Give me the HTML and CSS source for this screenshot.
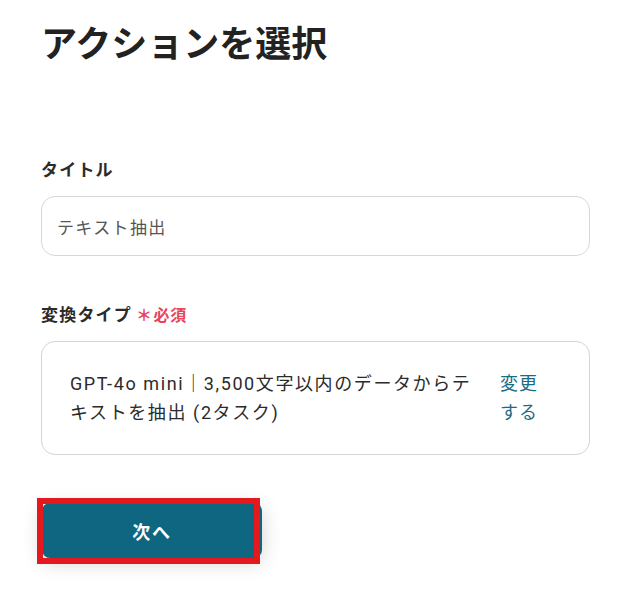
FILE: index.html
```html
<!DOCTYPE html>
<html lang="ja">
<head>
<meta charset="utf-8">
<link rel="stylesheet" href="styles.css">
</head>
<body>
<div class="page">
  <h1 class="title">アクションを選択</h1>
  <div class="field field-title">
    <div class="label">タイトル</div>
    <div class="input">テキスト抽出</div>
  </div>
  <div class="field field-type">
    <div class="label">変換タイプ<span class="req"><span class="ast">＊</span>必須</span></div>
    <div class="select-box">
      <div class="select-text">GPT-4o mini｜3,500文字以内のデータからテキストを抽出 (2タスク)</div>
      <div class="change-link">変更する</div>
    </div>
  </div>
  <div class="actions">
    <div class="btn-wrap">
      <button class="btn-next">次へ</button>
      <div class="highlight"></div>
    </div>
  </div>
</div>
</body>
</html>
```
FILE: styles.css
```css
html, body {
  margin: 0;
  padding: 0;
  background: #ffffff;
}
body {
  font-family: Roboto, "Noto Sans CJK JP", sans-serif;
  color: #2b2b2b;
  letter-spacing: 0.1em;
}
.page {
  padding: 0 33px 36px 41px;
}
.title {
  margin: 20px 0 0 0;
  font-size: 36px;
  line-height: 50px;
  font-weight: 700;
  color: #222222;
  letter-spacing: 0;
}
.field-title {
  margin-top: 88px;
}
.field-type {
  margin-top: 47px;
}
.label {
  font-size: 17px;
  line-height: 24px;
  font-weight: 700;
  color: #2b2b2b;
  margin-bottom: 14px;
  letter-spacing: 0.07em;
}
.field-type .label {
  margin-bottom: 13px;
}
.req {
  color: #e8455a;
  font-size: 16px;
  font-weight: 700;
  margin-left: 4px;
  letter-spacing: 0.04em;
}
.ast {
  margin-right: 1px;
}
.input {
  box-sizing: border-box;
  height: 60px;
  border: 1px solid #d4d8dd;
  border-radius: 14px;
  padding: 0 15px;
  display: flex;
  align-items: center;
  font-size: 17px;
  letter-spacing: 0.08em;
  color: #555555;
}
.select-box {
  box-sizing: border-box;
  height: 114px;
  border: 1px solid #d4d4d4;
  border-radius: 14px;
  padding: 27px 49px 27px 28px;
  display: flex;
  gap: 11px;
  font-size: 18px;
  line-height: 29px;
}
.select-text {
  flex: 1;
  color: #2b2b2b;
}
.change-link {
  width: 40px;
  color: #1b6b85;
  font-size: 18px;
  letter-spacing: 0.05em;
}
.actions {
  margin-top: 48px;
  padding-left: 1px;
}
.btn-wrap {
  position: relative;
  width: 220px;
  height: 55px;
}
.btn-next {
  display: block;
  width: 220px;
  height: 55px;
  border: none;
  border-radius: 8px;
  background: #0e6680;
  color: #ffffff;
  font-family: Roboto, "Noto Sans CJK JP", sans-serif;
  font-size: 18px;
  font-weight: 700;
  letter-spacing: 0.1em;
  box-shadow: 0 4px 20px rgba(0, 0, 0, 0.18);
}
.highlight {
  position: absolute;
  left: -5px;
  top: -5px;
  width: 223px;
  height: 66px;
  border: 6px solid #e3191e;
  box-sizing: border-box;
}
```
